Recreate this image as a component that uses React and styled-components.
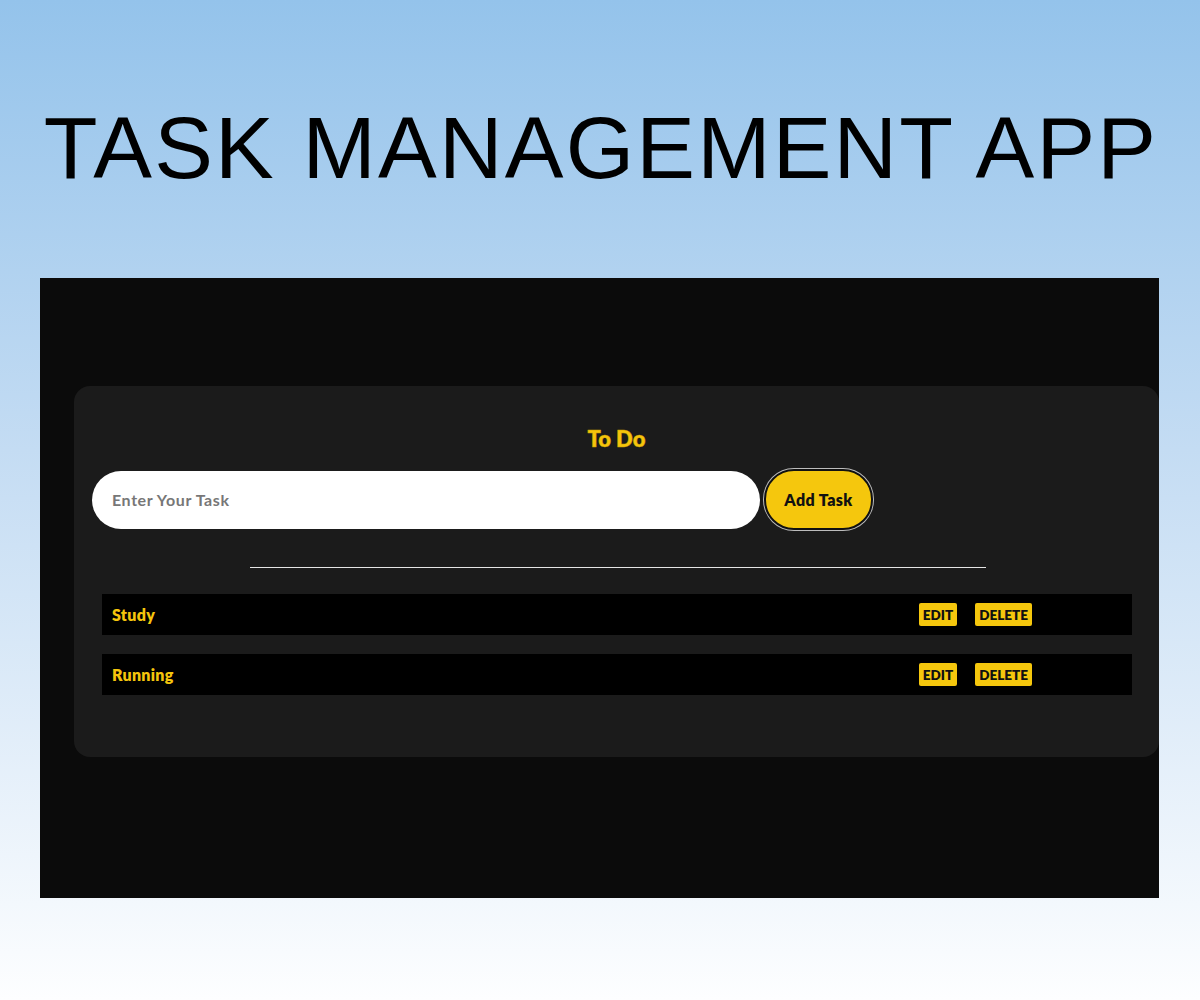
import styled, { createGlobalStyle } from "styled-components"

const GlobalStyle = createGlobalStyle`
    html, body {
        margin: 0;
        padding: 0;
    }
    body {
        min-height: 1000px;
        background: linear-gradient(180deg, #94c3eb 0%, #c4dcf3 45%, #fdfeff 100%);
        font-family: "Liberation Sans", Arial, sans-serif;
    }
`

const tasks = ["Study", "Running"]

const App = () => {
    return (
        <>
            <GlobalStyle />
            <Page>
                <Title>TASK MANAGEMENT APP</Title>
                <Panel>
                    <Card>
                        <Heading>To Do</Heading>
                        <InputRow>
                            <TaskInput placeholder="Enter Your Task" />
                            <AddButton>Add Task</AddButton>
                        </InputRow>
                        <Divider />
                        <TaskList>
                            {tasks.map((task) => (
                                <TaskRow key={task}>
                                    <TaskName>{task}</TaskName>
                                    <Actions>
                                        <SmallButton>EDIT</SmallButton>
                                        <SmallButton>DELETE</SmallButton>
                                    </Actions>
                                </TaskRow>
                            ))}
                        </TaskList>
                    </Card>
                </Panel>
            </Page>
        </>
    )
}

const Page = styled.div`
    height: 1000px;
    padding-top: 104px;
    box-sizing: border-box;
`

const Title = styled.h1`
    margin: 0 0 86px;
    padding-left: 2px;
    text-align: center;
    font-family: "Liberation Sans", Arial, sans-serif;
    font-weight: 400;
    font-size: 88px;
    line-height: 88px;
    letter-spacing: 2.2px;
    color: #000;
`

const Panel = styled.div`
    margin: 0 41px 0 40px;
    height: 620px;
    background-color: #0b0b0b;
    overflow: hidden;
    padding: 108px 0 0 34px;
    box-sizing: border-box;
`

const Card = styled.div`
    width: 1085px;
    height: 371px;
    box-sizing: border-box;
    background-color: #1b1b1b;
    border-radius: 16px;
    padding: 40px 0 0 18px;
    font-family: Lato, "Open Sans", sans-serif;
`

const Heading = styled.h2`
    margin: 0 18px 0 0;
    text-align: center;
    font-size: 22px;
    line-height: 26px;
    font-weight: 800;
    color: #f5c50c;
    -webkit-text-stroke: 0.4px #c99b00;
`

const InputRow = styled.div`
    display: flex;
    align-items: center;
    gap: 4px;
    margin-top: 17px;
    height: 61px;
`

const TaskInput = styled.input`
    width: 668px;
    height: 58px;
    box-sizing: border-box;
    border: none;
    outline: none;
    border-radius: 29px;
    padding: 0 20px;
    background: #fff;
    font-family: Lato, sans-serif;
    font-size: 16px;
    font-weight: 700;
    letter-spacing: 0.6px;
    color: #333;
    &::placeholder {
        color: #777;
    }
`

const AddButton = styled.button`
    width: 109px;
    height: 61px;
    box-sizing: border-box;
    border-radius: 30px;
    border: 2px solid #111;
    box-shadow: 0 0 0 1px #bdbdbd;
    background-color: #f5c70d;
    color: #111;
    font-family: Lato, sans-serif;
    font-size: 16px;
    font-weight: 800;
    letter-spacing: 0.4px;
    cursor: pointer;
`

const Divider = styled.hr`
    width: 736px;
    margin: 37px auto 0 158px;
    border: none;
    border-top: 1.5px solid #e5e5e5;
    height: 0;
`

const TaskList = styled.ul`
    list-style: none;
    margin: 26px 0 0 10px;
    padding: 0;
    display: flex;
    flex-direction: column;
    gap: 19px;
`

const TaskRow = styled.li`
    width: 1030px;
    height: 41px;
    box-sizing: border-box;
    background-color: #000;
    display: flex;
    align-items: center;
    justify-content: space-between;
    padding: 0 100px 0 10px;
`

const TaskName = styled.span`
    color: #f5c50c;
    font-size: 16px;
    font-weight: 800;
    letter-spacing: 0.3px;
`

const Actions = styled.div`
    display: flex;
    gap: 18px;
`

const SmallButton = styled.button`
    background-color: #f5c70d;
    border: none;
    border-radius: 2px;
    height: 23px;
    padding: 0 4px;
    font-family: Lato, sans-serif;
    font-size: 13.5px;
    font-weight: 800;
    color: #111;
    cursor: pointer;
`

export default App
